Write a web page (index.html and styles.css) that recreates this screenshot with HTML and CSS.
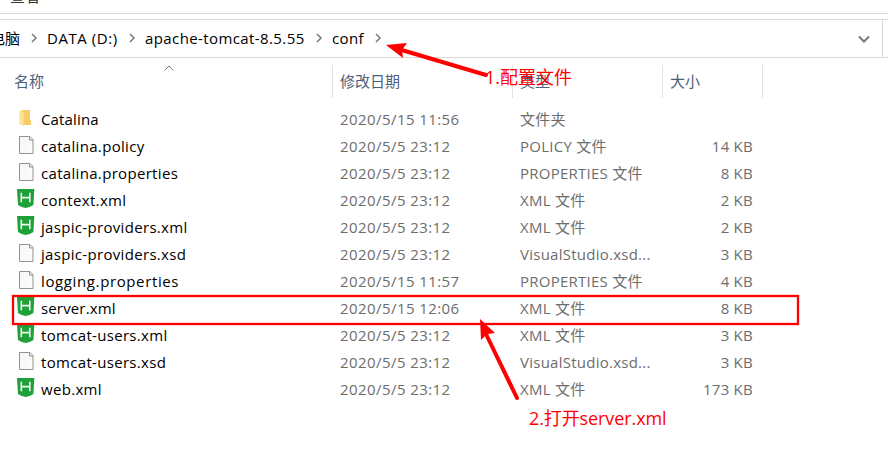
FILE: index.html
```html
<!DOCTYPE html>
<html lang="zh-CN">
<head>
<meta charset="utf-8">
<title>conf</title>
<link rel="stylesheet" href="styles.css">
</head>
<body>
<svg class="defs" width="0" height="0">
  <defs>
    <linearGradient id="gold" x1="0" x2="1"><stop offset="0" stop-color="#ffeaa9"/><stop offset="1" stop-color="#fbdc83"/></linearGradient>
    <linearGradient id="paper" x1="0" y1="0" x2="1" y2="1"><stop offset="0" stop-color="#f4f6f7"/><stop offset="1" stop-color="#fcfdfd"/></linearGradient>
    <symbol id="folder" viewBox="0 0 18 27">
      <path d="M5 4h8v9.500h1v5.500H5z" fill="#f3cd68"/>
      <path d="M2 4l5 2v14l-5-2z" fill="url(#gold)"/>
    </symbol>
    <symbol id="file" viewBox="0 0 18 27">
      <path d="M2.500 3.500h10.500l3 3v14h-13.500z" fill="url(#paper)" stroke="#929292"/>
      <path d="M12.500 3.500v3.500h3.500" fill="#e5e5e5" stroke="#929292"/>
    </symbol>
    <symbol id="hb" viewBox="0 0 18 27">
      <path d="M0 2h17.300l-.9 16q-3.600 2.500-7.700 3-4.200-.5-7.700-3z" fill="#20a038"/>
      <path d="M4.300 5.800v9.500M12.800 5.800v9.500M4.300 10.600h8.500" fill="none" stroke="#eefaf0" stroke-width="1.600"/>
    </symbol>
  </defs>
</svg>
<div class="window">
  <div class="tabs"><span>查看</span></div>
  <div class="address">
    <div class="field">
      <div class="crumbs">
        <span class="crumb c0">电脑</span><svg class="sep" viewBox="0 0 6 10"><path d="M1 1l4 4-4 4"/></svg>
        <span class="crumb c1">DATA (D:)</span><svg class="sep" viewBox="0 0 6 10"><path d="M1 1l4 4-4 4"/></svg>
        <span class="crumb c2">apache-tomcat-8.5.55</span><svg class="sep" viewBox="0 0 6 10"><path d="M1 1l4 4-4 4"/></svg>
        <span class="crumb c3">conf</span><svg class="sep" viewBox="0 0 6 10"><path d="M1 1l4 4-4 4"/></svg>
      </div>
      <svg class="drop" viewBox="0 0 12 8"><path d="M1 1.500l5 5 5-5"/></svg>
    </div>
  </div>
  <div class="head">
    <span class="name">名称<svg class="sort" viewBox="0 0 10 6"><path d="M.5 5.500L5 1l4.500 4.500"/></svg></span>
    <span>修改日期</span><span>类型</span><span>大小</span>
  </div>
  <div class="list">
    <div class="row"><svg><use href="#folder"/></svg><b class="snug">Catalina</b><span class="date">2020/5/15 11:56</span><span>文件夹</span><i></i></div>
    <div class="row"><svg><use href="#file"/></svg><b>catalina.policy</b><span class="date">2020/5/5 23:12</span><span>POLICY 文件</span><i>14 KB</i></div>
    <div class="row"><svg><use href="#file"/></svg><b>catalina.properties</b><span class="date">2020/5/5 23:12</span><span>PROPERTIES 文件</span><i>8 KB</i></div>
    <div class="row"><svg><use href="#hb"/></svg><b>context.xml</b><span class="date">2020/5/5 23:12</span><span>XML 文件</span><i>2 KB</i></div>
    <div class="row"><svg><use href="#hb"/></svg><b>jaspic-providers.xml</b><span class="date">2020/5/5 23:12</span><span>XML 文件</span><i>2 KB</i></div>
    <div class="row"><svg><use href="#file"/></svg><b>jaspic-providers.xsd</b><span class="date">2020/5/5 23:12</span><span>VisualStudio.xsd...</span><i>3 KB</i></div>
    <div class="row"><svg><use href="#file"/></svg><b class="wide">logging.properties</b><span class="date">2020/5/15 11:57</span><span>PROPERTIES 文件</span><i>4 KB</i></div>
    <div class="row"><svg><use href="#hb"/></svg><b class="snug">server.xml</b><span class="date">2020/5/15 12:06</span><span>XML 文件</span><i>8 KB</i></div>
    <div class="row"><svg><use href="#hb"/></svg><b>tomcat-users.xml</b><span class="date">2020/5/5 23:12</span><span>XML 文件</span><i>3 KB</i></div>
    <div class="row"><svg><use href="#file"/></svg><b>tomcat-users.xsd</b><span class="date">2020/5/5 23:12</span><span>VisualStudio.xsd...</span><i>3 KB</i></div>
    <div class="row"><svg><use href="#hb"/></svg><b>web.xml</b><span class="date">2020/5/5 23:12</span><span>XML 文件</span><i>173 KB</i></div>
  </div>
  <svg class="marks" viewBox="0 0 888 469">
    <rect x="13" y="296" width="785" height="28" fill="none" stroke="#f00" stroke-width="2.300"/>
    <path d="M486 75L400 49.500M517 398L486 334" fill="none" stroke="#f00" stroke-width="4" stroke-linecap="round"/>
    <path d="M386 45l21-2-5 7 1 8zM480 319l15 14-8 1-6 6z" fill="#f00"/>
  </svg>
  <div class="note one">1.配置文件</div>
  <div class="note two">2.打开server.xml</div>
</div>
</body>
</html>
```
FILE: styles.css
```css
* { box-sizing: border-box; }
body { margin: 0; background: #fff; }
.defs { position: absolute; }
.window {
  position: relative;
  width: 888px;
  height: 469px;
  overflow: hidden;
  font: 15px/27px "Open Sans", "Noto Sans CJK SC", sans-serif;
  color: #000;
  white-space: nowrap;
}
.tabs { height: 14px; border-bottom: 1px solid #d9d9d9; display: flex; align-items: flex-end; padding-left: 10px; overflow: hidden; }
.tabs span { line-height: 20px; height: 20px; margin-bottom: 7px; color: #333; }
.address { height: 39px; margin-top: 5px; border: solid #d9d9d9; border-width: 1px 0; }
.field { display: flex; align-items: center; justify-content: space-between; width: 883px; height: 37px; border-right: 1px solid #d9d9d9; }
.crumbs { display: flex; align-items: center; margin-left: -10px; }
.crumb { flex: none; }
.c0 { width: 41px; }
.c1 { width: 82px; letter-spacing: .55px; }
.c2 { width: 171px; letter-spacing: .4px; }
.c3 { width: 43px; letter-spacing: .4px; }
.sep { width: 6px; height: 10px; margin: 0 10px 2px 0; fill: none; stroke: #777; stroke-width: 1.5; }
.drop { width: 12px; height: 8px; margin-right: 12px; fill: none; stroke: #777; stroke-width: 2; }
.head { display: grid; grid-template-columns: 333px 180px 150px 100px; height: 32px; margin-top: 7px; line-height: 33px; color: #4c607a; }
.head > span { border-right: 1px solid #e2e2e2; padding-left: 7px; }
.head > .name { padding-left: 14px; position: relative; }
.sort { position: absolute; left: 164px; top: 0; width: 10px; height: 6px; fill: none; stroke: #777; }
.list { padding-top: 9px; }
.row { display: grid; grid-template-columns: 24px 299px 180px 133px 100px; height: 27px; padding-left: 17px; color: #6d6d6d; letter-spacing: .25px; }
.row svg { width: 18px; height: 27px; }
.row b { font-weight: 400; color: #000; letter-spacing: .32px; }
.row .snug { letter-spacing: .15px; }
.row .wide { letter-spacing: .62px; }
.row .date { letter-spacing: .43px; }
.row i { font-style: normal; text-align: right; }
.marks { position: absolute; left: 0; top: 0; width: 888px; height: 469px; }
.note { position: absolute; color: #f00; font-size: 18px; line-height: 26px; }
.one { left: 485px; top: 64px; }
.two { left: 529px; top: 405px; letter-spacing: -.1px; }
```
